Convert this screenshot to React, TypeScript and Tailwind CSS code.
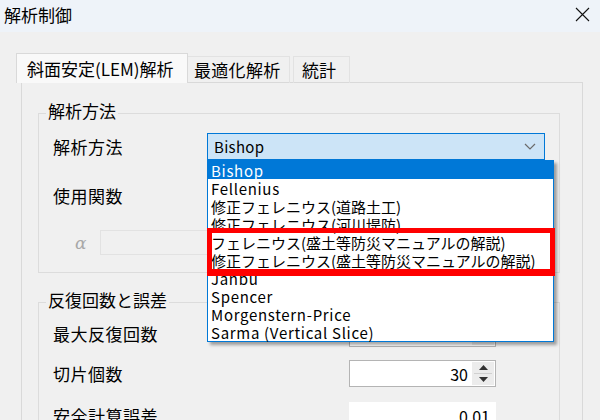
import React from "react";

const items = [
  "Bishop",
  "Fellenius",
  "修正フェレニウス(道路土工)",
  "修正フェレニウス(河川堤防)",
  "フェレニウス(盛土等防災マニュアルの解説)",
  "修正フェレニウス(盛土等防災マニュアルの解説)",
  "Janbu",
  "Spencer",
  "Morgenstern-Price",
  "Sarma (Vertical Slice)",
];

const latin = new Set([0, 1, 6, 7, 8, 9]);

function Chevron() {
  return (
    <svg width="12" height="7" viewBox="0 0 12 7" className="block">
      <path d="M1 1 L6 6 L11 1" fill="none" stroke="#6b6b6b" strokeWidth="1.2" />
    </svg>
  );
}

function Spinner({ value }: { value: string }) {
  return (
    <div className="w-[147px] h-[27px] bg-white border border-[#b4b4b4] flex items-stretch">
      <div className="flex-1 flex items-center justify-end pr-[4px] text-[16px] leading-none">{value}</div>
      <div className="w-[22px] flex flex-col items-center justify-center gap-[3px] bg-[#ececec] my-[1px] mr-[1px]">
        <svg width="9" height="5" viewBox="0 0 9 5" className="block">
          <path d="M0 5 L4.5 0 L9 5 Z" fill="#333" />
        </svg>
        <div className="w-[18px] h-px bg-[#d0d0d0]" />
        <svg width="9" height="5" viewBox="0 0 9 5" className="block">
          <path d="M0 0 L4.5 5 L9 0 Z" fill="#333" />
        </svg>
      </div>
    </div>
  );
}

export default function App() {
  return (
    <div className="w-[600px] h-[420px] overflow-hidden bg-[#f0f0f0] text-black font-['Noto_Sans_CJK_JP','Noto_Sans',sans-serif]">
      {/* title bar */}
      <div className="h-[32px] bg-[#eef3f9] flex items-center justify-between pl-[4px] pr-[10px] pb-[3px]">
        <span className="text-[17px] leading-[20px]">解析制御</span>
        <svg width="15" height="15" viewBox="0 0 15 15" className="block">
          <path d="M1 1 L14 14 M14 1 L1 14" stroke="#111" strokeWidth="1.1" />
        </svg>
      </div>

      <div className="pl-[16px] pt-[21px]">
        {/* tabs */}
        <div className="flex items-end relative z-10 mb-[-1px]">
          <div className="w-[172px] h-[30px] bg-[#f9f9f9] border border-b-0 border-[#d9d9d9] pl-[10px] flex items-center text-[17px] leading-[20px]">
            斜面安定(LEM)解析
          </div>
          <div className="w-[102px] h-[27px] border border-b-0 border-l-0 border-[#e2e2e2] pl-[6px] flex items-center text-[17px] leading-[20px] tracking-[0.3px]">
            最適化解析
          </div>
          <div className="ml-[3px] w-[57px] h-[27px] border border-b-0 border-[#e2e2e2] pl-[8px] flex items-center text-[17px] leading-[20px]">
            統計
          </div>
        </div>

        {/* panel */}
        <div className="ml-[5px] w-[562px] h-[400px] border border-[#d9d9d9] bg-[#f0f0f0] pt-[19px] pl-[16px]">
          {/* group 1 */}
          <fieldset className="w-[522px] border border-[#dcdcdc] px-[7px] pb-[17px]">
            <legend className="px-[2px] text-[17px] leading-[18px] pb-[4px]">解析方法</legend>

            <div className="mt-[9px] h-[27px] flex items-center pl-[7px]">
              <div className="w-[154px] text-[17px] leading-[20px] tracking-[0.5px]">解析方法</div>
              <div className="relative">
                <div className="w-[338px] h-[27px] bg-[#cce4f7] border border-[#0078d7] flex items-center justify-between pl-[6px] pr-[8px]">
                  <span className="text-[15px] leading-none tracking-[0.3px]">Bishop</span>
                  <Chevron />
                </div>
                {/* dropdown list */}
                <div className="absolute left-0 top-[27px] z-20 w-[347px] bg-white border border-[#0078d7] shadow-[3px_3px_3px_rgba(0,0,0,0.35)]">
                  {items.map((t, i) => (
                    <div
                      key={t}
                      className={
                        (i === 0
                          ? "bg-[#0078d7] text-white "
                          : "") +
                        (latin.has(i) ? "tracking-[0.7px] " : "") +
                        "h-[18px] pl-[3px] flex items-center text-[15px] leading-none whitespace-nowrap"
                      }
                    >
                      {t}
                    </div>
                  ))}
                  <div className="absolute left-[-1px] top-[67px] w-[348px] h-[48px] border-[5px] border-b-[7px] border-[#ff0000]" />
                </div>
              </div>
            </div>

            <div className="mt-[22px] h-[27px] flex items-center pl-[7px]">
              <div className="w-[154px] text-[17px] leading-[20px] tracking-[0.5px]">使用関数</div>
              <div className="w-[338px] h-[27px] bg-[#e5e5e5] border border-[#cccccc]" />
            </div>

            <div className="mt-[21px] h-[25px] flex items-center pl-[29px]">
              <div className="w-[25px] text-[17px] leading-[20px] italic text-[#a8a8a8] font-['DejaVu_Serif',serif]">α</div>
              <div className="w-[445px] h-[25px] bg-[#f0f0f0] border border-[#e2e2e2]" />
            </div>
          </fieldset>

          {/* group 2 */}
          <fieldset className="mt-[18px] w-[522px] border border-[#dcdcdc] px-[7px] pb-[17px]">
            <legend className="px-[2px] text-[17px] leading-[18px] pb-[4px]">反復回数と誤差</legend>

            <div className="mt-[7px] h-[27px] flex items-center pl-[7px]">
              <div className="w-[296px] text-[17px] leading-[20px] tracking-[0.5px]">最大反復回数</div>
              <Spinner value="50" />
            </div>

            <div className="mt-[13px] h-[27px] flex items-center pl-[7px]">
              <div className="w-[296px] text-[17px] leading-[20px] tracking-[0.5px]">切片個数</div>
              <Spinner value="30" />
            </div>

            <div className="mt-[15px] h-[27px] flex items-center pl-[7px]">
              <div className="w-[296px] text-[17px] leading-[20px] tracking-[0.5px]">安全計算誤差</div>
              <div className="w-[147px] h-[27px] bg-white flex items-center justify-end pr-[6px] text-[16px] leading-none">0.01</div>
            </div>
          </fieldset>
        </div>
      </div>
    </div>
  );
}
